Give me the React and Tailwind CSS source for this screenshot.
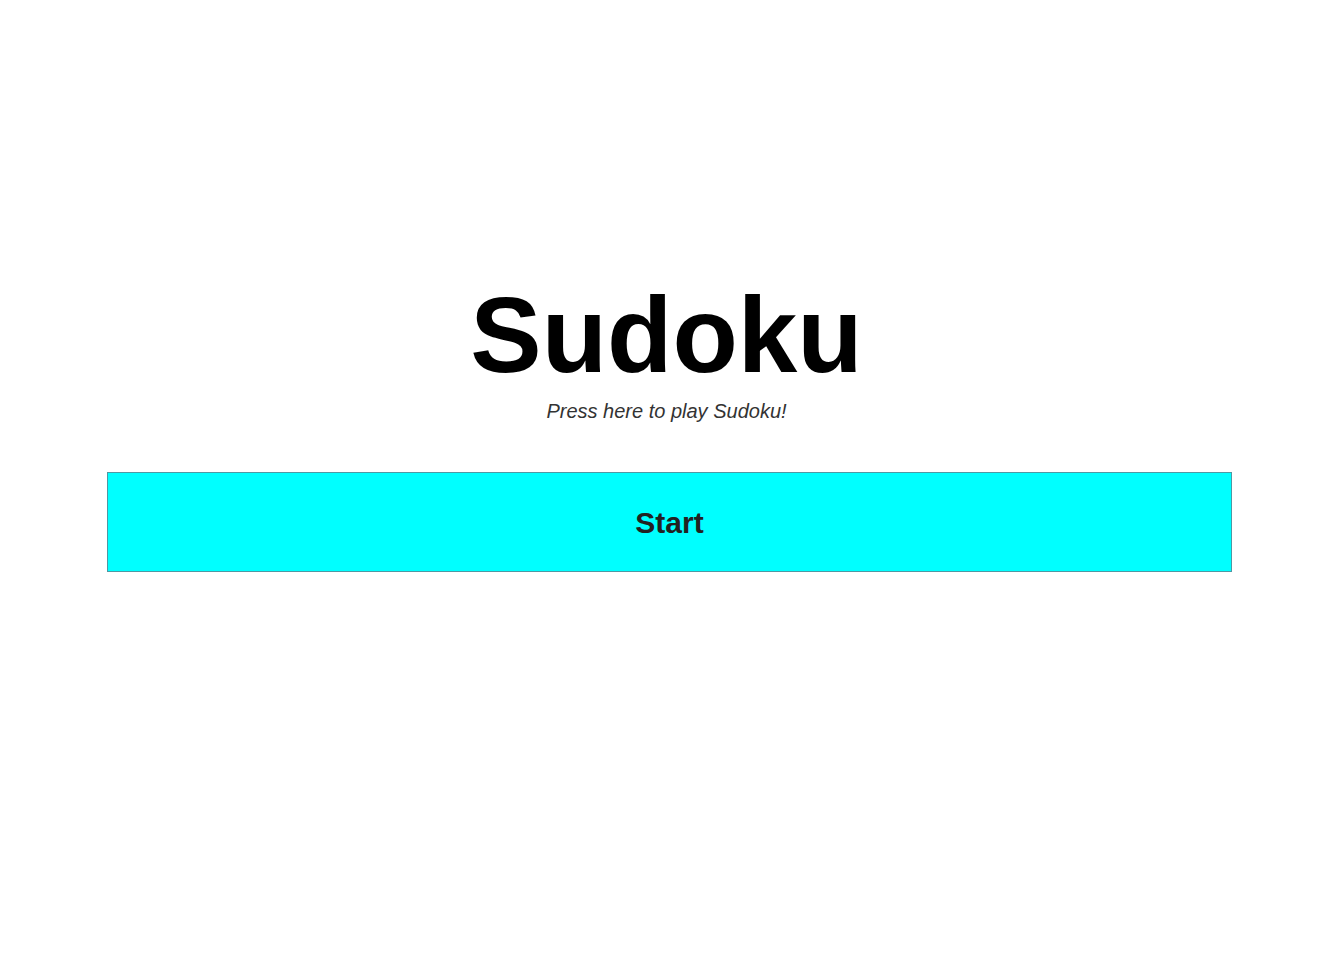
import React from 'react';

export default function App() {
  return (
    <div className="min-h-screen bg-white pt-[281px] pl-[107px] pr-[94px] font-['Liberation_Sans',Arial,sans-serif]">
      {/* Title */}
      <div className="flex flex-col items-center text-center pr-[6px]">
        <h1 className="text-[107px] leading-[108px] font-bold text-black">Sudoku</h1>
        <p className="mt-[10px] text-[20px] leading-[24px] italic text-[#333]">
          Press here to play Sudoku!
        </p>
      </div>

      {/* Start button */}
      <button className="mt-[49px] w-full h-[100px] bg-[#00ffff] border border-[#4f98a3] text-[30px] font-bold text-[#222]">
        Start
      </button>
    </div>
  );
}
